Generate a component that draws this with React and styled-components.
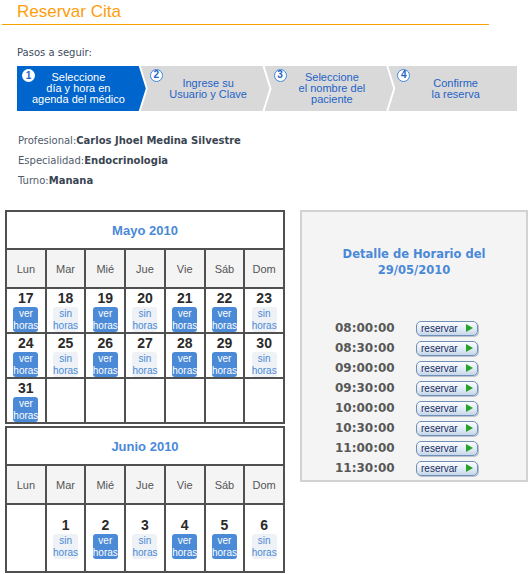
import styled, { createGlobalStyle } from "styled-components";

const GlobalStyle = createGlobalStyle`
  body {
    margin: 0;
    background: #fff;
    font-family: "DejaVu Sans", sans-serif;
  }
`;

const Page = styled.div`
  width: 532px;
  height: 574px;
  overflow: hidden;
`;

const Header = styled.h1`
  margin: 0 0 0 2px;
  width: 487px;
  height: 25px;
  box-sizing: border-box;
  padding: 2px 0 0 15px;
  border-bottom: 1px solid #f7a300;
  color: #ff9d0a;
  font: normal 17px/20px "Liberation Sans", Arial, sans-serif;
`;

const StepsLabel = styled.p`
  margin: 21px 0 0 17px;
  font-size: 10px;
  line-height: 14px;
  color: #3d4b5e;
`;

const Steps = styled.div`
  display: flex;
  margin: 6px 0 0 17px;
  width: 500px;
  height: 45px;
`;

const arrow = {
  first: "polygon(0 0, calc(100% - 7px) 0, 100% 50%, calc(100% - 7px) 100%, 0 100%)",
  middle:
    "polygon(0 0, calc(100% - 7px) 0, 100% 50%, calc(100% - 7px) 100%, 0 100%, 7px 50%)",
  last: "polygon(0 0, 100% 0, 100% 100%, 0 100%, 7px 50%)",
};

const Step = styled.div`
  position: relative;
  flex: none;
  width: 128.75px;
  box-sizing: border-box;
  display: flex;
  align-items: center;
  justify-content: center;
  margin-left: ${(p) => (p.$kind === "first" ? "0" : "-5px")};
  padding: ${(p) => (p.$kind === "first" ? "0 6px 0 0" : "0 2px 0 8px")};
  clip-path: ${(p) => arrow[p.$kind]};
  background: ${(p) => (p.$active ? "#0065cc" : "#d9d9d9")};
  color: ${(p) => (p.$active ? "#fff" : "#1f63c6")};
  font: 11px/11px "Liberation Sans", Arial, sans-serif;
  text-align: center;
`;

const StepNum = styled.span`
  position: absolute;
  left: ${(p) => (p.$first ? "5px" : "9px")};
  top: 3px;
  width: 13px;
  height: 13px;
  box-sizing: border-box;
  border-radius: 50%;
  background: #fff;
  border: ${(p) => (p.$active ? "none" : "1.5px solid #3f86e0")};
  color: #1f63c6;
  font: bold 10px/13px "Liberation Sans", Arial, sans-serif;
  line-height: ${(p) => (p.$active ? "13px" : "10px")};
  text-align: center;
`;

const Info = styled.div`
  margin: 20px 0 0 18px;
  font-size: 10px;
  line-height: 20px;
  color: #4f5b6b;
`;

const Value = styled.b`
  color: #3a4552;
`;

const Main = styled.div`
  display: flex;
  align-items: flex-start;
  gap: 15px;
  margin: 19px 0 0 5px;
`;

const Calendars = styled.div`
  display: flex;
  flex-direction: column;
  gap: 2px;
  width: 280px;
`;

const Month = styled.div`
  display: grid;
  grid-template-columns: repeat(7, 1fr);
  gap: 2px;
  padding: 2px;
  background: #505050;
  font-family: "Liberation Sans", Arial, sans-serif;
`;

const MonthTitle = styled.div`
  grid-column: 1 / -1;
  height: 36px;
  display: flex;
  align-items: center;
  justify-content: center;
  background: #fff;
  color: #4a89d8;
  font-size: 13px;
  font-weight: bold;
`;

const DayName = styled.div`
  height: 37px;
  display: flex;
  align-items: center;
  justify-content: center;
  background: #f4f4f4;
  color: #555;
  font-size: 11px;
`;

const DayCell = styled.div`
  height: ${(p) => (p.$tall ? "66px" : "43px")};
  display: flex;
  flex-direction: column;
  align-items: center;
  justify-content: ${(p) => (p.$tall ? "center" : "flex-start")};
  padding-top: ${(p) => (p.$tall ? "0" : "1px")};
  box-sizing: border-box;
  background: #fff;
`;

const DayNum = styled.span`
  font-size: 14px;
  font-weight: bold;
  line-height: 16px;
  color: #2a2a2a;
  margin-bottom: 1px;
`;

const Hours = styled.span`
  width: 25px;
  height: 25px;
  display: flex;
  flex-direction: column;
  align-items: center;
  justify-content: center;
  border-radius: 3px;
  background: ${(p) => (p.$open ? "#4b8ad6" : "#eef1f5")};
  color: ${(p) => (p.$open ? "#fff" : "#4b8ad6")};
  font-size: 10px;
  line-height: 11.5px;
`;

const Panel = styled.div`
  width: 228px;
  height: 272px;
  box-sizing: border-box;
  border: 2px solid #d2d2d2;
  background: #f4f4f4;
  padding-top: 34px;
`;

const PanelTitle = styled.h2`
  margin: 0 0 40px;
  text-align: center;
  color: #4a89d8;
  font-size: 11.5px;
  line-height: 16px;
  font-weight: bold;
`;

const Slot = styled.div`
  display: flex;
  align-items: center;
  gap: 23px;
  height: 20px;
  padding-left: 33px;
`;

const Time = styled.span`
  width: 58px;
  color: #585858;
  font-size: 12px;
  font-weight: bold;
`;

const ReserveButton = styled.button`
  display: flex;
  align-items: center;
  justify-content: space-between;
  width: 62px;
  height: 15px;
  padding: 0 4px 0 4px;
  box-sizing: border-box;
  border: 1px solid #6f8fb6;
  border-radius: 5px;
  background: linear-gradient(#fcfdff, #e3edf8 50%, #c6d7ea);
  box-shadow: 1px 1px 0 #b9c4d0;
  color: #1b2d5c;
  font: 10px/13px "Liberation Sans", Arial, sans-serif;
  cursor: pointer;

  &::after {
    content: "";
    border-left: 7px solid #27a327;
    border-top: 4px solid transparent;
    border-bottom: 4px solid transparent;
  }
`;

const steps = [
  ["Seleccione", "día y hora en", "agenda del médico"],
  ["Ingrese su", "Usuario y Clave"],
  ["Seleccione", "el nombre del", "paciente"],
  ["Confirme", "la reserva"],
];

const dayNames = ["Lun", "Mar", "Mié", "Jue", "Vie", "Sáb", "Dom"];

const may = [
  [17, 1], [18, 0], [19, 1], [20, 0], [21, 1], [22, 1], [23, 0],
  [24, 1], [25, 0], [26, 1], [27, 0], [28, 1], [29, 1], [30, 0],
  [31, 1], null, null, null, null, null, null,
];

const june = [null, [1, 0], [2, 1], [3, 0], [4, 1], [5, 1], [6, 0]];

const times = [
  "08:00:00", "08:30:00", "09:00:00", "09:30:00",
  "10:00:00", "10:30:00", "11:00:00", "11:30:00",
];

function Calendar({ title, days, tall }) {
  return (
    <Month>
      <MonthTitle>{title}</MonthTitle>
      {dayNames.map((d) => (
        <DayName key={d}>{d}</DayName>
      ))}
      {days.map((d, i) => (
        <DayCell key={i} $tall={tall}>
          {d && (
            <>
              <DayNum>{d[0]}</DayNum>
              <Hours $open={d[1]}>
                <span>{d[1] ? "ver" : "sin"}</span>
                <span>horas</span>
              </Hours>
            </>
          )}
        </DayCell>
      ))}
    </Month>
  );
}

export default function App() {
  return (
    <Page>
      <GlobalStyle />
      <Header>Reservar Cita</Header>
      <StepsLabel>Pasos a seguir:</StepsLabel>
      <Steps>
        {steps.map((lines, i) => {
          const kind = i === 0 ? "first" : i === steps.length - 1 ? "last" : "middle";
          return (
            <Step key={i} $kind={kind} $active={i === 0}>
              <StepNum $active={i === 0} $first={i === 0}>
                {i + 1}
              </StepNum>
              <div>
                {lines.map((l) => (
                  <div key={l}>{l}</div>
                ))}
              </div>
            </Step>
          );
        })}
      </Steps>
      <Info>
        <div>
          Profesional:<Value>Carlos Jhoel Medina Silvestre</Value>
        </div>
        <div>
          Especialidad:<Value>Endocrinologia</Value>
        </div>
        <div>
          Turno:<Value>Manana</Value>
        </div>
      </Info>
      <Main>
        <Calendars>
          <Calendar title="Mayo 2010" days={may} />
          <Calendar title="Junio 2010" days={june} tall />
        </Calendars>
        <Panel>
          <PanelTitle>
            Detalle de Horario del
            <br />
            29/05/2010
          </PanelTitle>
          {times.map((t) => (
            <Slot key={t}>
              <Time>{t}</Time>
              <ReserveButton>reservar</ReserveButton>
            </Slot>
          ))}
        </Panel>
      </Main>
    </Page>
  );
}
